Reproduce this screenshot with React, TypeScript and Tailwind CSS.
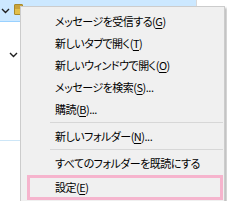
const items: { label: string; key: string; tail?: string; sepBefore?: boolean }[] = [
  { label: "メッセージを受信する", key: "G" },
  { label: "新しいタブで開く", key: "T" },
  { label: "新しいウィンドウで開く", key: "O" },
  { label: "メッセージを検索", key: "S", tail: "..." },
  { label: "購読", key: "B", tail: "..." },
  { label: "新しいフォルダー", key: "N", tail: "...", sepBefore: true },
  { label: "すべてのフォルダーを既読にする", key: "", sepBefore: true },
  { label: "設定", key: "E" },
];

const Chevron = () => (
  <svg width="9" height="6" viewBox="0 0 9 6" className="block">
    <path d="M1 1 L4.5 4.5 L8 1" fill="none" stroke="#1f1f1f" strokeWidth="1.4" />
  </svg>
);

export default function App() {
  return (
    <div
      className="relative h-[201px] w-[227px] overflow-hidden bg-white text-black"
      style={{ fontFamily: '"Noto Sans CJK JP", "Noto Sans", sans-serif' }}
    >
      {/* tree behind the menu */}
      <div className="flex h-[22px]">
        <div className="flex h-[22px] w-[196px] items-center border-b border-[#99d1ff] bg-[#cce8ff] pl-[1px]">
          <Chevron />
          <div className="ml-[4px] mt-[-2px] h-[11px] w-[9px] overflow-hidden rounded-[1px] border border-[#a88a2a] bg-[#e2bf4a]">
            <div className="h-[4px] bg-[#c9a23a]" />
          </div>
        </div>
        <div className="w-px bg-[#d9d9d9]" />
      </div>
      <div className="ml-[9px] mt-[30px]">
        <Chevron />
      </div>
      <div className="mt-[82px] h-px w-[20px] bg-[#cde6f7]" />

      {/* context menu */}
      <div className="absolute left-[20px] top-[6px] w-[205px] border border-[#cccccc] bg-[#f0f0f0] pb-[4px] pt-[3px] shadow-[2px_2px_2px_rgba(0,0,0,0.25)] [font-feature-settings:'palt']">
        {items.map((it, i) => (
          <div key={i}>
            {it.sepBefore && (
              <div className="ml-[29px] mr-[1px] py-[2px]">
                <div className="h-px bg-[#d7d7d7]" />
              </div>
            )}
            <div
              className={
                i === items.length - 1
                  ? "ml-[6px] mr-[1px] mt-[1px] flex h-[25px] items-center whitespace-nowrap border-[3px] border-[#f6b4cd] pl-[25px] text-[11px] leading-none tracking-[-0.5px]"
                  : "ml-[6px] mr-[1px] flex h-[22px] items-center whitespace-nowrap border-[3px] border-transparent pl-[25px] text-[11px] leading-none tracking-[-0.5px]"
              }
            >
              <span>
                {it.label}
                {it.key && (
                  <>
                    (<span className="underline underline-offset-[2px]">{it.key}</span>)
                  </>
                )}
                {it.tail}
              </span>
            </div>
          </div>
        ))}
      </div>
    </div>
  );
}
